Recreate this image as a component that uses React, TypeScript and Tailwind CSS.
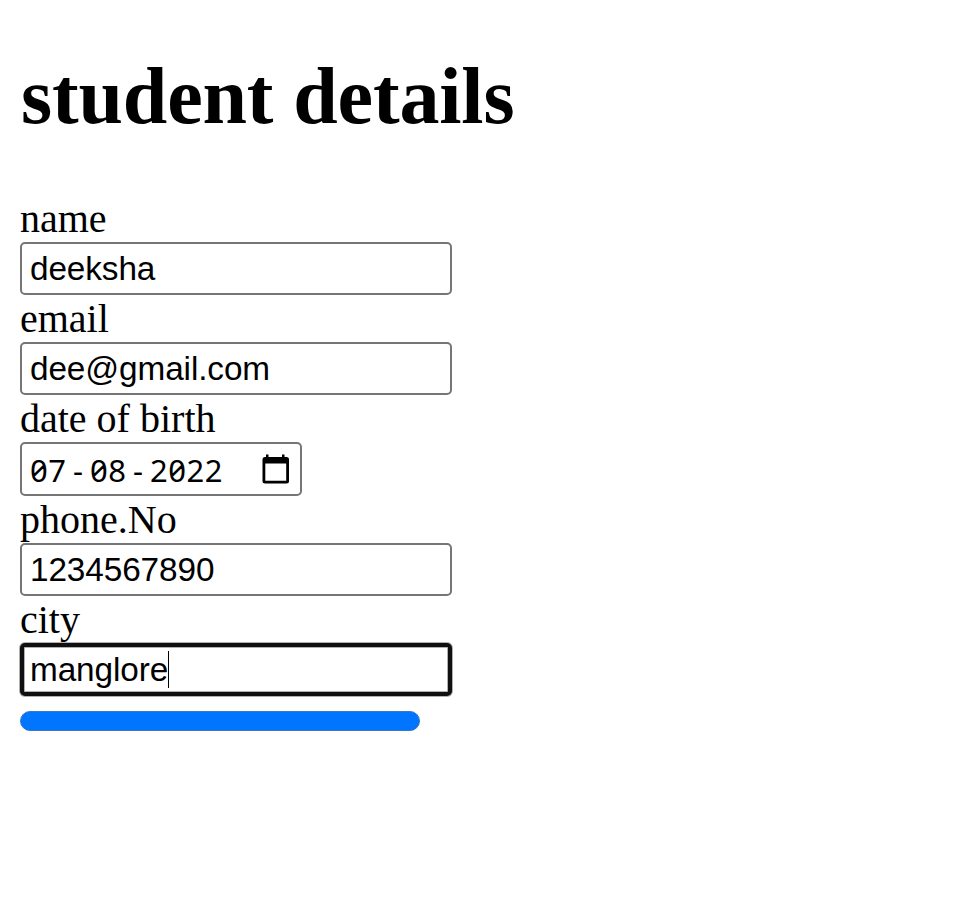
import React from 'react';

const field =
  'flex h-[53px] w-[432px] items-center rounded-[5px] border-2 border-[#767676] bg-white pl-2 font-["Liberation_Sans",Arial,sans-serif] text-[33.33px] leading-[38px] tracking-[-0.1px] text-black';
const label = 'h-[47px] text-[40px] leading-[48px]';

export default function App() {
  return (
    <main className="flex h-[897px] w-[963px] flex-col items-start overflow-hidden bg-white pl-5 pt-[50px] font-['Liberation_Serif','Times_New_Roman',serif] text-black">
      <h1 className="h-[145px] whitespace-nowrap pl-px text-[80px] font-bold leading-[92px] tracking-[-0.15px]">student details</h1>
      <label className={label}>name</label>
      <div className={field}>deeksha</div>
      <label className={label}>email</label>
      <div className={field}>dee@gmail.com</div>
      <label className={label}>date of birth</label>
      <div className="flex h-[54px] w-[282px] items-center justify-between rounded-[5px] border-2 border-[#767676] bg-white pl-2 pr-[10px] font-['Noto_Sans','DejaVu_Sans_Mono',monospace] text-[31px] leading-[38px] tracking-[0.55px] slashed-zero">
        <div className="flex pt-0.5">
          <span className="w-[36.6px]">07</span>
          <span className="w-[23.4px] text-center">-</span>
          <span className="w-[36.6px]">08</span>
          <span className="w-[23.4px] text-center">-</span>
          <span>2022</span>
        </div>
        <svg className="h-[30px] w-[28px]" viewBox="0 0 28 30" fill="#000">
          <path
            fillRule="evenodd"
            d="M4 0.5H6.5V3H20V0.5H22.5V3H24.5Q27 3 27 5.5V27Q27 29.5 24.5 29.5H3Q0.5 29.5 0.5 27V5.5Q0.5 3 3 3H4ZM3.3 9.5V26.8H24.2V9.5Z"
          />
        </svg>
      </div>
      <label className={label}>phone.No</label>
      <div className={field}>1234567890</div>
      <label className={label}>city</label>
      <div className="flex h-[53px] w-[432px] items-center rounded-[5px] border-4 border-[#101010] bg-white pl-1.5 font-['Liberation_Sans',Arial,sans-serif] text-[33.33px] leading-[38px] tracking-[-0.1px] shadow-[0_0_0_1px_#b0b0b0,inset_0_0_0_1px_#b0b0b0]">
        manglore<span className="h-[37px] w-px bg-black" />
      </div>
      <div className="mt-[15px] h-5 w-[400px] rounded-full border border-[#3a78c4] bg-[#0075ff]" />
    </main>
  );
}
